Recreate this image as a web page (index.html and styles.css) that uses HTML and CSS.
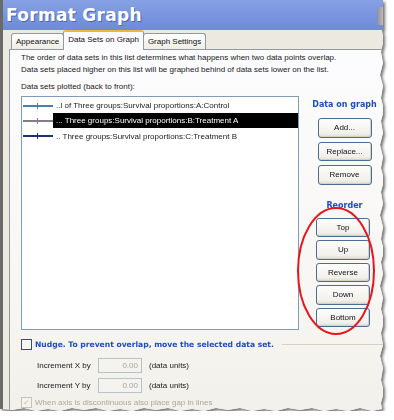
FILE: index.html
```html
<!DOCTYPE html>
<html lang="en">
<head>
  <meta charset="UTF-8">
  <title>Format Graph</title>
  <link rel="stylesheet" href="styles.css">
</head>
<body>
  <div class="shadow">
    <div class="window">
      <!-- Title bar -->
      <div class="titlebar">
        <span class="title">Format Graph</span>
        <span class="close"></span>
      </div>
      <div class="body">
        <!-- Tabs -->
        <div class="tabs">
          <div class="tab">Appearance</div>
          <div class="tab active">Data Sets on Graph</div>
          <div class="tab">Graph Settings</div>
        </div>
        <div class="panel">
          <p class="intro">The order of data sets in this list determines what happens when two data points overlap.<br>Data sets placed higher on this list will be graphed behind of data sets lower on the list.</p>
          <p class="caption">Data sets plotted (back to front):</p>
          <div class="main">
            <div class="list">
              <div class="row">
                <span class="legend legend-a"><i></i></span>
                <span class="label">..l of Three groups:Survival proportions:A:Control</span>
              </div>
              <div class="row selected">
                <span class="legend legend-b"><i></i></span>
                <span class="label">... Three groups:Survival proportions:B:Treatment A</span>
              </div>
              <div class="row">
                <span class="legend legend-c"><i></i></span>
                <span class="label">.. Three groups:Survival proportions:C:Treatment B</span>
              </div>
            </div>
            <div class="side">
              <div class="group-title">Data on graph</div>
              <div class="buttons">
                <button>Add...</button>
                <button>Replace...</button>
                <button>Remove</button>
              </div>
              <div class="group-title reorder">Reorder</div>
              <div class="buttons narrow">
                <button>Top</button>
                <button>Up</button>
                <button>Reverse</button>
                <button>Down</button>
                <button>Bottom</button>
              </div>
            </div>
          </div>
          <!-- Nudge -->
          <div class="nudge">
            <span class="check"></span>
            <span class="nudge-text">Nudge. To prevent overlap, move the selected data set.</span>
            <span class="rule"></span>
          </div>
          <div class="field">
            <span class="field-label">Increment X by</span>
            <span class="input">0.00</span>
            <span>(data units)</span>
          </div>
          <div class="field">
            <span class="field-label">Increment Y by</span>
            <span class="input">0.00</span>
            <span>(data units)</span>
          </div>
          <div class="gap-option">
            <span class="check checked">&#10003;</span>
            <span>When axis is discontinuous also place gap in lines</span>
          </div>
        </div>
      </div>
      <!-- Annotation -->
      <svg class="ring" width="82" height="132" viewBox="0 0 82 132">
        <ellipse cx="41" cy="66" rx="38" ry="63" fill="none" stroke="#e8141c" stroke-width="2"/>
      </svg>
    </div>
  </div>
</body>
</html>
```

FILE: styles.css
```css
body {
  margin: 0;
  background-color: #fff;
  font-family: "Liberation Sans", Arial, sans-serif;
  font-size: 8px;
  color: #1a1a1a;
}
.shadow {
  width: 388px;
  filter: drop-shadow(2px 2px 1.5px rgba(0, 0, 0, 0.55));
}
.window {
  position: relative;
  width: 383px;
  height: 411px;
  background-color: #eceae0;
  border-left: 3px solid #6a6a6a;
  box-sizing: border-box;
  display: flex;
  flex-direction: column;
  clip-path: polygon(0 0, 383px 0, 383px 6px, 386px 8px, 386px 26px, 382px 30px, 384px 40px, 381px 52px, 383px 63px, 380px 75px, 383px 86px, 381px 98px, 384px 110px, 381px 121px, 383px 133px, 380px 145px, 383px 157px, 381px 168px, 384px 180px, 381px 192px, 383px 204px, 380px 215px, 383px 227px, 381px 239px, 384px 251px, 381px 262px, 383px 274px, 380px 286px, 383px 298px, 381px 309px, 384px 321px, 381px 333px, 383px 345px, 380px 356px, 383px 368px, 381px 380px, 384px 392px, 381px 403px, 382px 409px, 372px 411px, 360px 408px, 348px 411px, 336px 409px, 324px 411px, 312px 408px, 300px 410px, 288px 408px, 276px 411px, 264px 409px, 252px 411px, 240px 408px, 228px 410px, 216px 408px, 204px 411px, 192px 409px, 180px 411px, 168px 408px, 156px 410px, 144px 408px, 132px 411px, 120px 409px, 108px 411px, 96px 408px, 84px 410px, 72px 408px, 60px 411px, 48px 409px, 36px 411px, 24px 408px, 12px 410px, 0 409px);
}
.titlebar {
  height: 30px;
  background: linear-gradient(#86a1e4, #7793de 60%, #6e8bd9);
  display: flex;
  align-items: center;
  justify-content: space-between;
  padding-left: 3px;
  flex-shrink: 0;
}
.title {
  font-family: "DejaVu Sans", sans-serif;
  font-weight: bold;
  font-size: 17px;
  color: #fff;
  letter-spacing: 0.3px;
  text-shadow: 1px 1px 0 #4d66b0;
}
.close {
  width: 6px;
  height: 18px;
  margin-top: 2px;
  background: linear-gradient(90deg, #8b8fa8, #c5b9b0);
  border-radius: 3px 0 0 3px;
}
.body {
  flex: 1;
  display: flex;
  flex-direction: column;
  padding: 1px 0 0 6px;
}
.tabs {
  display: flex;
  align-items: flex-end;
  height: 18px;
  padding-left: 2px;
}
.tab {
  height: 15px;
  line-height: 15px;
  padding: 0 4px;
  margin-right: -1px;
  border: 1px solid #919b9c;
  border-bottom: none;
  border-radius: 3px 3px 0 0;
  background: linear-gradient(#fff, #eeede5);
  color: #111;
}
.tab.active {
  height: 18px;
  line-height: 16px;
  padding: 0 4px;
  position: relative;
  z-index: 1;
  margin-bottom: -1px;
  border-top: 2px solid #f3b43f;
  background: #fcfcfe;
}
.panel {
  flex: 1;
  border: 1px solid #919b9c;
  border-right: none;
  border-bottom: none;
  background: linear-gradient(#fcfcfe, #f7f6f2 70%, #f1f0ea);
  padding: 2px 0 0 11px;
}
p {
  margin: 0;
}
.intro {
  line-height: 12px;
}
.caption {
  margin-top: 5px;
  line-height: 12px;
}
.main {
  display: flex;
  margin-top: 3px;
}
.list {
  width: 278px;
  height: 234px;
  box-sizing: border-box;
  border: 1px solid #7f9db9;
  background-color: #fff;
  padding-top: 1px;
}
.row {
  display: flex;
  align-items: center;
  height: 15.3px;
}
.legend {
  position: relative;
  width: 30px;
  height: 2px;
  margin-left: 1px;
}
.legend i {
  position: absolute;
  left: 14px;
  top: -2px;
  width: 1px;
  height: 6px;
  background: inherit;
}
.legend-a { background-color: #4b80a8; }
.legend-b { background-color: #877b86; }
.legend-c { background-color: #1d2f7d; }
.label {
  flex: 1;
  height: 15px;
  line-height: 15px;
  padding-left: 3px;
  white-space: nowrap;
  overflow: hidden;
}
.row.selected .label {
  background-color: #000;
  color: #fff;
}
.side {
  flex: 1;
  padding: 3px 0 0 7px;
  display: flex;
  flex-direction: column;
  align-items: center;
}
.group-title {
  font-family: "DejaVu Sans", sans-serif;
  font-weight: bold;
  font-size: 8px;
  color: #1c4dc2;
  line-height: 12px;
}
.group-title.reorder {
  margin-top: 15px;
}
.buttons {
  display: flex;
  flex-direction: column;
  gap: 4px;
  margin-top: 7px;
}
.buttons.narrow {
  gap: 3px;
  margin-top: 6px;
  margin-left: -3px;
}
button {
  width: 54px;
  height: 19.5px;
  padding: 0;
  font-family: "Liberation Sans", Arial, sans-serif;
  font-size: 8px;
  color: #111;
  border: 1px solid #4a6d94;
  border-radius: 3px;
  background: linear-gradient(#fdfdfb, #f1f0ea 80%, #dedbd0);
  box-shadow: inset -1px -1px 0 #d6d2c2;
}
.nudge {
  display: flex;
  align-items: center;
  height: 12px;
  margin-top: 8px;
}
.check {
  width: 9px;
  height: 9px;
  border: 1px solid #27538a;
  background: #f6f6f3;
  margin-right: 3px;
  flex-shrink: 0;
}
.nudge-text {
  font-family: "DejaVu Sans", sans-serif;
  font-weight: bold;
  font-size: 7.6px;
  color: #1c4dc2;
  white-space: nowrap;
}
.rule {
  flex: 1;
  height: 1px;
  margin-left: 8px;
  background-color: #d3d1c6;
}
.field {
  display: flex;
  align-items: center;
  height: 16px;
  margin: 7px 0 0 16px;
}
.field + .field {
  margin-top: 4px;
}
.field-label {
  width: 61px;
}
.input {
  width: 44px;
  height: 15px;
  box-sizing: border-box;
  border: 1px solid #b8c2cc;
  background-color: #f4f3ee;
  color: #a6a49a;
  text-align: right;
  line-height: 13px;
  padding-right: 3px;
  margin-right: 7px;
}
.gap-option {
  display: flex;
  align-items: center;
  height: 12px;
  margin-top: 3px;
  color: #aca99c;
}
.check.checked {
  border-color: #c6c4ba;
  background: #f4f3ee;
  color: #bdbab0;
  font-size: 8px;
  line-height: 9px;
  text-align: center;
  margin-right: 3px;
}
.ring {
  position: absolute;
  left: 292px;
  top: 205px;
}
```
